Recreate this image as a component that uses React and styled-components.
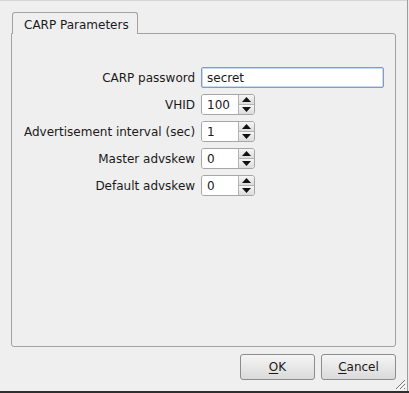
import React from 'react';
import styled, { createGlobalStyle } from 'styled-components';

const GlobalStyle = createGlobalStyle`
  html, body {
    margin: 0;
    padding: 0;
    background: #efefef;
  }
  body {
    font-family: "DejaVu Sans", "Liberation Sans", sans-serif;
    font-size: 12px;
    color: #1a1a1a;
  }
`;

const Screen = styled.div`
  width: 409px;
  height: 393px;
  display: flex;
  flex-direction: column;
  overflow: hidden;
`;

const Top = styled.div`
  flex: 1;
  display: flex;
  min-height: 0;
`;

const Window = styled.div`
  position: relative;
  width: 407px;
  background: #efefef;
  border-top: 1px solid #d6d6d6;
  box-sizing: border-box;
  padding: 11px 11px 0 11px;
  display: flex;
  flex-direction: column;
`;

const Desktop = styled.div`
  flex: 1;
  border-left: 1px solid #9c9c9c;
  background: #ebebeb;
`;

const BottomEdge = styled.div`
  height: 2px;
  background: #2e2e2e;
`;

const TabBar = styled.div`
  display: flex;
  padding-left: 1px;
  position: relative;
  z-index: 1;
`;

const Tab = styled.div`
  width: 126px;
  height: 22px;
  box-sizing: border-box;
  border: 1px solid #a2a2a2;
  border-bottom: none;
  border-radius: 3px 3px 0 0;
  background: #efefef;
  padding: 5px 0 0 11px;
  margin-bottom: -1px;
`;

const Pane = styled.div`
  height: 314px;
  box-sizing: border-box;
  border: 1px solid #a2a2a2;
  border-radius: 0 3px 3px 3px;
  padding: 33px 11px 0 12px;
`;

const Form = styled.div`
  display: grid;
  grid-template-columns: auto 1fr;
  column-gap: 6px;
  row-gap: 6px;
  grid-auto-rows: 21px;
  align-items: center;
`;

const Label = styled.div`
  text-align: right;
  white-space: nowrap;
`;

const TextInput = styled.div`
  height: 21px;
  box-sizing: border-box;
  border: 1px solid #7f9ec4;
  box-shadow: inset 0 0 0 1px #c9d8ea;
  border-radius: 2px;
  background: #fff;
  padding: 3px 5px 0;
  line-height: 14px;
`;

const Spin = styled.div`
  width: 54px;
  height: 21px;
  box-sizing: border-box;
  display: flex;
  border: 1px solid #a6a6a6;
  border-radius: 3px;
  overflow: hidden;
`;

const SpinValue = styled.div`
  flex: 1;
  background: #fff;
  padding: 3px 0 0 5px;
  line-height: 14px;
`;

const SpinButtons = styled.div`
  width: 15px;
  display: flex;
  flex-direction: column;
  border-left: 1px solid #b4b4b4;
`;

const SpinArrow = styled.div`
  flex: 1;
  display: flex;
  align-items: center;
  justify-content: center;
  background: linear-gradient(#f6f6f6, #dcdcdc);
  & + & {
    border-top: 1px solid #b4b4b4;
  }
`;

const Footer = styled.div`
  display: flex;
  justify-content: flex-end;
  gap: 6px;
  padding-top: 7px;
`;

const Button = styled.div`
  width: 75px;
  height: 26px;
  box-sizing: border-box;
  border: 1px solid #8c8c8c;
  border-radius: 3px;
  background: linear-gradient(#f5f5f5, #dadada);
  display: flex;
  align-items: center;
  justify-content: center;
  & u {
    text-decoration-thickness: 1px;
    text-underline-offset: 2px;
  }
`;

const Grip = styled.svg`
  position: absolute;
  right: 1px;
  bottom: 1px;
`;

const Arrow = ({ up }) => (
  <svg width="9" height="5" viewBox="0 0 9 5">
    {up ? <polygon points="0,5 9,5 4.5,0" fill="#111" /> : <polygon points="0,0 9,0 4.5,5" fill="#111" />}
  </svg>
);

const SpinBox = ({ value }) => (
  <Spin>
    <SpinValue>{value}</SpinValue>
    <SpinButtons>
      <SpinArrow><Arrow up /></SpinArrow>
      <SpinArrow><Arrow /></SpinArrow>
    </SpinButtons>
  </Spin>
);

const spinRows = [
  ['VHID', '100'],
  ['Advertisement interval (sec)', '1'],
  ['Master advskew', '0'],
  ['Default advskew', '0'],
];

const App = () => (
  <Screen>
    <GlobalStyle />
    <Top>
      <Window>
        <TabBar>
          <Tab>CARP Parameters</Tab>
        </TabBar>
        <Pane>
          <Form>
            <Label>CARP password</Label>
            <TextInput>secret</TextInput>
            {spinRows.map(([label, value]) => (
              <React.Fragment key={label}>
                <Label>{label}</Label>
                <SpinBox value={value} />
              </React.Fragment>
            ))}
          </Form>
        </Pane>
        <Footer>
          <Button><span><u>O</u>K</span></Button>
          <Button><span><u>C</u>ancel</span></Button>
        </Footer>
        <Grip width="12" height="12" viewBox="0 0 12 12">
          <path d="M11 2 L2 11 M11 6 L6 11 M11 10 L10 11" stroke="#7a7a7a" strokeWidth="1" />
          <path d="M12 3 L3 12 M12 7 L7 12" stroke="#ffffff" strokeWidth="1" />
        </Grip>
      </Window>
      <Desktop />
    </Top>
    <BottomEdge />
  </Screen>
);

export default App;
